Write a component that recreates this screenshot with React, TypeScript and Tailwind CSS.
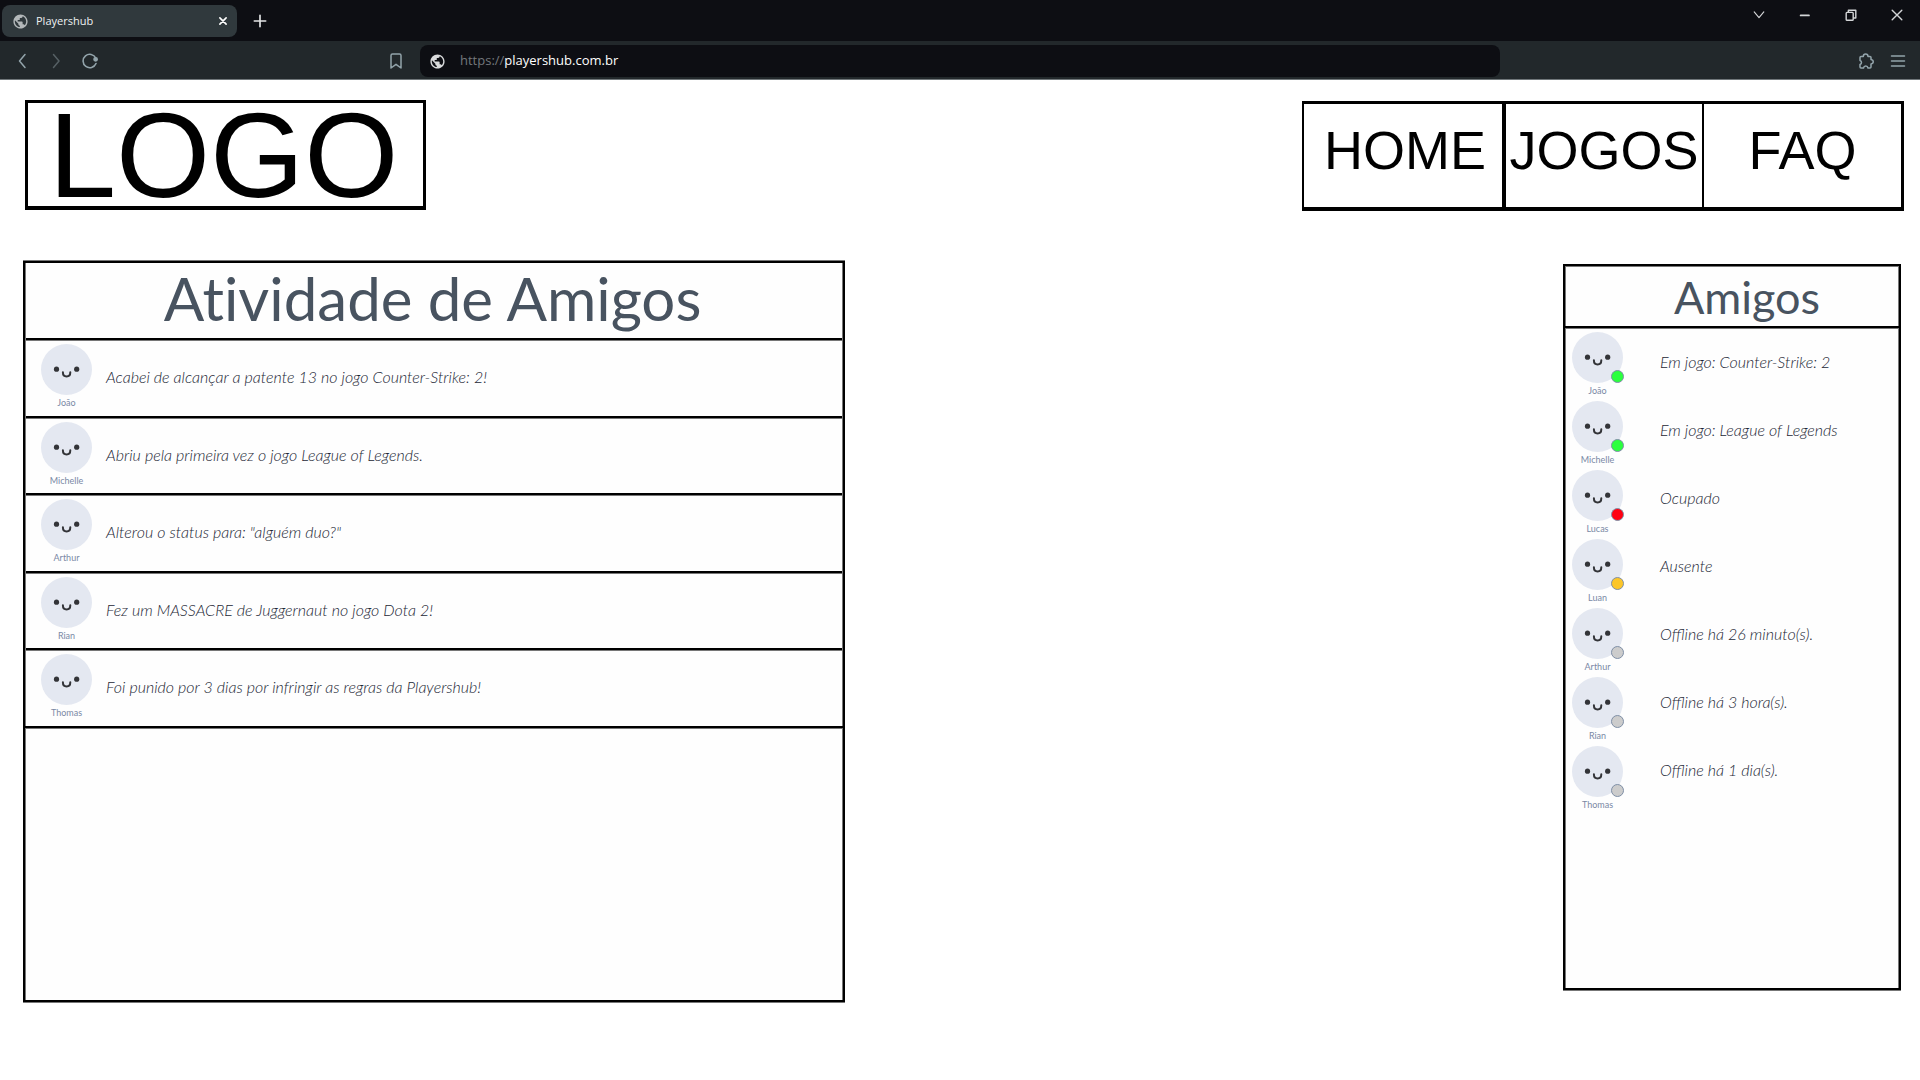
import React from "react";
import { MdPublic } from "react-icons/md";

const activities = [
  { name: "João", text: "Acabei de alcançar a patente 13 no jogo Counter-Strike: 2!" },
  { name: "Michelle", text: "Abriu pela primeira vez o jogo League of Legends." },
  { name: "Arthur", text: 'Alterou o status para: "alguém duo?"' },
  { name: "Rian", text: "Fez um MASSACRE de Juggernaut no jogo Dota 2!" },
  { name: "Thomas", text: "Foi punido por 3 dias por infringir as regras da Playershub!" },
];

type Status = "online" | "busy" | "away" | "offline";

const statusColor: Record<Status, string> = {
  online: "bg-[#2bff3e]",
  busy: "bg-[#ff0011]",
  away: "bg-[#fcc629]",
  offline: "bg-[#cccccc]",
};

const friends: { name: string; status: Status; text: string }[] = [
  { name: "João", status: "online", text: "Em jogo: Counter-Strike: 2" },
  { name: "Michelle", status: "online", text: "Em jogo: League of Legends" },
  { name: "Lucas", status: "busy", text: "Ocupado" },
  { name: "Luan", status: "away", text: "Ausente" },
  { name: "Arthur", status: "offline", text: "Offline há 26 minuto(s)." },
  { name: "Rian", status: "offline", text: "Offline há 3 hora(s)." },
  { name: "Thomas", status: "offline", text: "Offline há 1 dia(s)." },
];

function Icon({ size = 16, width = 1.5, children }: { size?: number; width?: number; children: React.ReactNode }) {
  return (
    <svg
      width={size}
      height={size}
      viewBox="0 0 16 16"
      fill="none"
      stroke="currentColor"
      strokeWidth={width}
      strokeLinecap="round"
      strokeLinejoin="round"
      aria-hidden="true"
    >
      {children}
    </svg>
  );
}

function Avatar({ name, status }: { name: string; status?: Status }) {
  return (
    <div className="relative flex w-[51px] shrink-0 flex-col items-center">
      <svg width="51" height="51" viewBox="0 0 51 51" aria-hidden="true">
        <circle cx="25.5" cy="25.5" r="25.5" fill="#e4e8f1" />
        <circle cx="15.5" cy="25.2" r="2.6" fill="#333438" />
        <circle cx="35.7" cy="25.2" r="2.6" fill="#333438" />
        <path d="M21.900 28.200c0 5.600 7.400 5.600 7.400 0" fill="none" stroke="#333438" strokeWidth="2" strokeLinecap="round" />
      </svg>
      <span className="mt-0.5 text-[9px] leading-3 text-[#7a89a5]">{name}</span>
      {status && (
        <span
          className={`absolute -right-px top-[38px] size-[13px] rounded-full border border-[#7f8fa6] ${statusColor[status]}`}
        />
      )}
    </div>
  );
}

function BrowserBar() {
  return (
    <div className="font-['Open_Sans','Noto_Sans',sans-serif]">
      <div className="flex h-[41px] justify-between bg-[#0d0e13] pt-[5px] pl-0.5">
        <div className="flex items-start">
          <div className="flex h-8 w-[235px] items-center rounded-lg bg-[#30393d] pr-[9px] pl-2.5">
            <MdPublic size={17} className="text-[#b3b8ba]" />
            <span className="ml-[7px] flex-1 text-[11px] font-medium text-[#eef1f2]">Playershub</span>
            <button aria-label="Fechar aba" className="text-white">
              <Icon size={10} width={2.6}>
                <path d="M3 3l10 10M13 3L3 13" />
              </Icon>
            </button>
          </div>
          <button aria-label="Nova aba" className="ml-4 flex h-8 items-center text-[#e3e5e6]">
            <Icon size={14} width={1.9}>
              <path d="M8 1.5v13M1.5 8h13" />
            </Icon>
          </button>
        </div>
        <div className="flex h-5 items-center gap-8 pr-4 text-[#d4d6d8]">
          <button aria-label="Abas">
            <Icon size={14} width={1.3}>
              <path d="M2.5 4.5L8 11l5.500-6.500" />
            </Icon>
          </button>
          <button aria-label="Minimizar">
            <Icon size={14} width={2}>
              <path d="M3 8.500h9.500" />
            </Icon>
          </button>
          <button aria-label="Restaurar">
            <Icon size={14} width={1.600}>
              <rect x="2.500" y="5" width="8" height="9" rx="1" />
              <path d="M5 4.500V2.500h8.500v9h-2.500" />
            </Icon>
          </button>
          <button aria-label="Fechar">
            <Icon size={14} width={1.600}>
              <path d="M2.500 2.500l11 11M13.500 2.500l-11 11" />
            </Icon>
          </button>
        </div>
      </div>
      <div className="flex h-[39px] items-center border-b border-[#70777a] bg-[#22282b] px-3.5 pt-0.5 text-[#93a4ab]">
        <button aria-label="Voltar">
          <Icon size={16} width={1.500}>
            <path d="M11 1.500L5.500 8l5.500 6.500" />
          </Icon>
        </button>
        <button aria-label="Avançar" className="ml-[18px] text-[#566064]">
          <Icon size={16} width={1.500}>
            <path d="M5.500 1.500L11 8l-5.500 6.500" />
          </Icon>
        </button>
        <button aria-label="Recarregar" className="ml-[18px]">
          <Icon size={16} width={1.600}>
            <path d="M14 10.500A6.700 6.700 0 1 1 13.800 5" />
            <circle cx="13.600" cy="6.300" r="1.600" fill="currentColor" />
          </Icon>
        </button>
        <button aria-label="Favoritar" className="ml-[290px]">
          <Icon size={16} width={1.500}>
            <path d="M3 15V2.500a1.500 1.500 0 0 1 1.500-1.500h7a1.500 1.500 0 0 1 1.500 1.500V15l-5-3.700z" />
          </Icon>
        </button>
        <div className="ml-4 flex h-8 max-w-[1080px] flex-1 items-center rounded-lg bg-[#0d0e13] pl-[9px] text-[13px]">
          <MdPublic size={17} className="text-[#d9dbdc]" />
          <label htmlFor="url" className="ml-3.5 text-[#73777b]">
            https://
          </label>
          <input
            id="url"
            className="min-w-0 flex-1 bg-transparent font-medium text-white outline-none"
            defaultValue="playershub.com.br"
          />
        </div>
        <button aria-label="Extensões" className="ml-auto">
          <Icon size={16} width={1.500}>
            <path d="M2 4.500q0-1 1-1h2.300C5.300.3 10 .3 10 3.500h2q1 0 1 1v2c3 .6 3 4 0 4.500v3q0 1-1 1h-2c-.5-2.600-4-2.600-4.500 0H3q-1 0-1-1v-2.500c2-.7 2-3.500 0-4z" />
          </Icon>
        </button>
        <button aria-label="Menu" className="ml-4">
          <Icon size={16} width={1.500}>
            <path d="M1.500 3h13M1.500 8h13M1.500 13h13" />
          </Icon>
        </button>
      </div>
    </div>
  );
}

export default function App() {
  return (
    <div className="min-h-screen bg-white font-['Lato',sans-serif] text-[#485360]">
      <BrowserBar />
      <header className="grid grid-cols-[401fr_876fr_602fr] pt-5 pr-4 pl-[25px] font-['Liberation_Sans',Arial,sans-serif] text-black">
        <a
          href="#inicio"
          className="flex h-[110px] items-center justify-center border-[3px] border-b-4 border-black pt-0.5 pr-1 text-[121px] leading-none"
        >
          LOGO
        </a>
        <nav className="col-start-3 mt-px grid h-[110px] grid-cols-[202fr_198fr_197fr] border-t-[3px] border-r-[3px] border-b-4 border-l-2 border-black text-[54px] leading-none">
          <a href="#home" className="flex items-center justify-center border-r-4 border-black pb-3 pl-1">
            HOME
          </a>
          <a href="#jogos" className="flex items-center justify-center border-r-2 border-black pb-3">
            JOGOS
          </a>
          <a href="#faq" className="flex items-center justify-center pb-3">
            FAQ
          </a>
        </nav>
      </header>

      <main className="grid grid-cols-[822fr_718fr_338fr] items-start pt-[50px] pr-[19px] pb-10 pl-[23px]">
        <section className="min-h-[741px] border-2 border-black bg-[#fefefe] shadow-[inset_1px_0_#777,inset_-1px_0_#777,0_1px_#777,0_-1px_#777]">
          <h1 className="flex h-[75px] items-center justify-center pr-[3px] pb-1.5 text-[60px] leading-none [font-variant-ligatures:none]">
            Atividade de Amigos
          </h1>
          <ul className="flex h-[390px] flex-col border-b-2 border-black px-px shadow-[0_1px_#777]">
            {activities.map((a) => (
              <li
                key={a.name}
                className="flex flex-1 border-t-2 border-black pt-1 pl-[15px] shadow-[inset_0_1px_#777]"
              >
                <Avatar name={a.name} />
                <p className="mt-[21px] ml-3.5 text-base leading-6 font-light text-[#1c2735] italic">{a.text}</p>
              </li>
            ))}
          </ul>
        </section>

        <section className="col-start-3 mt-[3px] min-h-[726px] border-2 border-black bg-[#fefefe] shadow-[inset_1px_0_#777,inset_-1px_0_#777,inset_0_1px_#777,0_1px_#777]">
          <h2 className="flex h-[62px] items-center justify-center border-b-2 border-black pt-[3px] pl-[30px] text-[45px] leading-none shadow-[0_1px_#777]">
            Amigos
          </h2>
          <div className="flex pt-1 pl-[7px]">
            <ul className="flex flex-col gap-1">
              {friends.map((f) => (
                <li key={f.name}>
                  <Avatar name={f.name} status={f.status} />
                </li>
              ))}
            </ul>
            <ul className="mt-[18px] ml-[37px] flex flex-col gap-11 text-base leading-6 font-light text-[#1c2735] italic">
              {friends.map((f) => (
                <li key={f.name}>{f.text}</li>
              ))}
            </ul>
          </div>
        </section>
      </main>
    </div>
  );
}
